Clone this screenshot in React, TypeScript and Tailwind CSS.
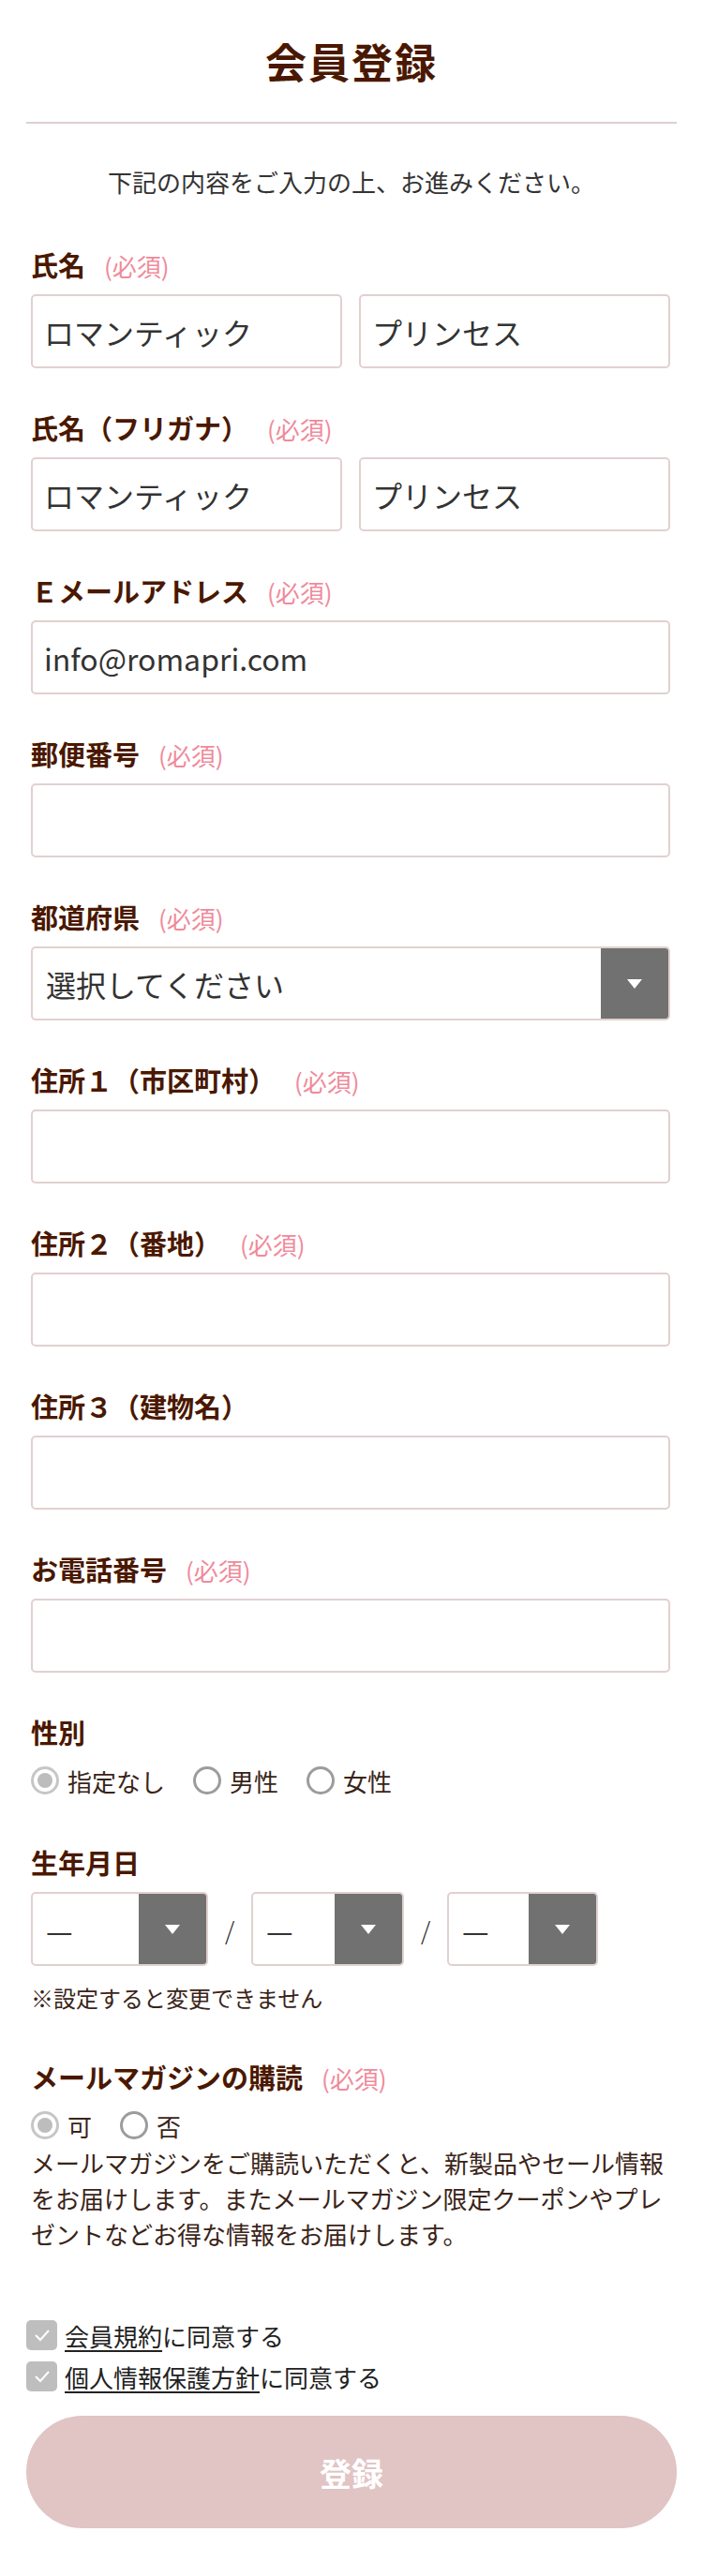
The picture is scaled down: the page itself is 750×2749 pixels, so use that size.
import React from "react";

const Required = () => (
  <span className="ml-[20px] text-[26px] font-normal text-[#f08a9b]">(必須)</span>
);

const Label = ({ children, required }: { children: React.ReactNode; required?: boolean }) => (
  <div className="flex h-[40px] items-center text-[29px] font-bold text-[#4a1800]">
    <span>{children}</span>
    {required && <Required />}
  </div>
);

const TextBox = ({ value, className = "" }: { value?: string; className?: string }) => (
  <div
    className={`flex h-[79px] items-center rounded-[5px] border-2 border-[#e2d0d0] bg-white px-[12px] text-[32px] text-[#333] ${className}`}
  >
    {value}
  </div>
);

const Arrow = () => (
  <svg width="16" height="10" viewBox="0 0 16 10">
    <polygon points="0,0 16,0 8,10" fill="#fff" />
  </svg>
);

const SelectBox = ({ value, className = "" }: { value: string; className?: string }) => (
  <div
    className={`flex h-[79px] overflow-hidden rounded-[5px] border-2 border-[#e2d0d0] bg-white ${className}`}
  >
    <div className="flex flex-1 items-center px-[14px] text-[32px] text-[#333]">{value}</div>
    <div className="flex w-[72px] items-center justify-center bg-[#717171]">
      <Arrow />
    </div>
  </div>
);

const Radio = ({ label, checked }: { label: string; checked?: boolean }) => (
  <div className="flex items-center gap-[9px]">
    <span
      className={`flex h-[30px] w-[30px] items-center justify-center rounded-full border-[3px] ${
        checked ? "border-[#c6c6c6]" : "border-[#9c9c9c]"
      }`}
    >
      {checked && <span className="h-[16px] w-[16px] rounded-full bg-[#bdbdbd]" />}
    </span>
    <span className="text-[26px] text-[#3a2418]">{label}</span>
  </div>
);

const Check = ({ link, rest }: { link: string; rest: string }) => (
  <div className="flex h-[36px] items-center gap-[8px]">
    <span className="flex h-[32px] w-[33px] items-center justify-center rounded-[5px] bg-[#bebebe]">
      <svg width="18" height="14" viewBox="0 0 18 14">
        <polyline points="2,7 7,12 16,2" fill="none" stroke="#fff" strokeWidth="2" />
      </svg>
    </span>
    <span className="text-[26px] text-[#222]">
      <span className="underline decoration-2 underline-offset-4">{link}</span>
      {rest}
    </span>
  </div>
);

const fields: { label: string; required?: boolean; pair?: [string, string]; value?: string; select?: string }[] = [
  { label: "氏名", required: true, pair: ["ロマンティック", "プリンセス"] },
  { label: "氏名（フリガナ）", required: true, pair: ["ロマンティック", "プリンセス"] },
  { label: "Ｅメールアドレス", required: true, value: "info@romapri.com" },
  { label: "郵便番号", required: true },
  { label: "都道府県", required: true, select: "選択してください" },
  { label: "住所１（市区町村）", required: true },
  { label: "住所２（番地）", required: true },
  { label: "住所３（建物名）" },
  { label: "お電話番号", required: true },
];

export default function App() {
  return (
    <div className="w-[750px] bg-white pb-[51px] font-['Noto_Sans_CJK_JP',sans-serif]">
      <h1 className="pt-[35px] text-center text-[44px] leading-[60px] font-bold tracking-[2px] text-[#4a1800]">
        会員登録
      </h1>
      <div className="mx-[28px] mt-[35px] h-[2px] bg-[#ddd0d0]" />
      <p className="mt-[44px] text-center text-[26px] leading-[36px] text-[#333]">
        下記の内容をご入力の上、お進みください。
      </p>

      <div className="mt-[51px] px-[28px]">
        <div className="flex flex-col gap-[44px] pl-[5px] pr-[7px]">
          {fields.map((f) => (
            <div key={f.label}>
              <Label required={f.required}>{f.label}</Label>
              <div className="mt-[11px]">
                {f.pair ? (
                  <div className="flex gap-[18px]">
                    <TextBox value={f.pair[0]} className="flex-1" />
                    <TextBox value={f.pair[1]} className="flex-1" />
                  </div>
                ) : f.select ? (
                  <SelectBox value={f.select} />
                ) : (
                  <TextBox value={f.value} />
                )}
              </div>
            </div>
          ))}

          <div>
            <Label>性別</Label>
            <div className="mt-[13px] flex h-[36px] items-center gap-[30px]">
              <Radio label="指定なし" checked />
              <Radio label="男性" />
              <Radio label="女性" />
            </div>
          </div>
        </div>

        <div className="mt-[50px] pl-[5px] pr-[7px]">
          <Label>生年月日</Label>
          <div className="mt-[11px] flex items-center">
            <SelectBox value="—" className="w-[189px]" />
            <span className="w-[46px] text-center text-[26px] font-light text-[#222]">/</span>
            <SelectBox value="—" className="w-[163px]" />
            <span className="w-[46px] text-center text-[26px] font-light text-[#222]">/</span>
            <SelectBox value="—" className="w-[161px]" />
          </div>
          <p className="mt-[17px] text-[24px] leading-[34px] text-[#3a2418]">※設定すると変更できません</p>

          <div className="mt-[48px]">
            <Label required>メールマガジンの購読</Label>
            <div className="mt-[13px] flex h-[36px] items-center gap-[30px]">
              <Radio label="可" checked />
              <Radio label="否" />
            </div>
            <p className="mt-[3px] text-[26px] leading-[38px] text-[#3a2418]">
              メールマガジンをご購読いただくと、新製品やセール情報をお届けします。またメールマガジン限定クーポンやプレゼントなどお得な情報をお届けします。
            </p>
          </div>
        </div>

        <div className="mt-[71px] flex flex-col gap-[8px]">
          <Check link="会員規約" rest="に同意する" />
          <Check link="個人情報保護方針" rest="に同意する" />
        </div>

        <button className="mt-[24px] flex h-[120px] w-full items-center justify-center rounded-full bg-[#e1c4c4] text-[34px] font-bold text-white">
          登録
        </button>
      </div>
    </div>
  );
}
